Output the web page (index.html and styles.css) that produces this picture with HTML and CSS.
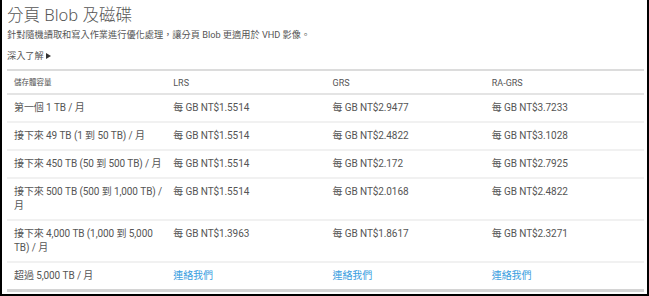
FILE: index.html
```html
<!DOCTYPE html>
<html lang="zh-Hant">
<head>
<meta charset="utf-8">
<link rel="stylesheet" href="styles.css">
</head>
<body>
<div class="frame">
  <h1 class="title">分頁 Blob 及磁碟</h1>
  <p class="desc">針對隨機讀取和寫入作業進行優化處理，讓分頁 Blob 更適用於 VHD 影像。</p>
  <p class="more">深入了解 <span class="tri"></span></p>
  <table class="prices">
    <colgroup>
      <col class="col"><col class="col"><col class="col"><col class="col">
    </colgroup>
    <thead>
      <tr><th><span class="cjk-head">儲存體容量</span></th><th>LRS</th><th>GRS</th><th>RA-GRS</th></tr>
    </thead>
    <tbody>
      <tr><td>第一個 1 TB / 月</td><td>每 GB NT$1.5514</td><td>每 GB NT$2.9477</td><td>每 GB NT$3.7233</td></tr>
      <tr><td>接下來 49 TB (1 到 50 TB) / 月</td><td>每 GB NT$1.5514</td><td>每 GB NT$2.4822</td><td>每 GB NT$3.1028</td></tr>
      <tr><td>接下來 450 TB (50 到 500 TB) / 月</td><td>每 GB NT$1.5514</td><td>每 GB NT$2.172</td><td>每 GB NT$2.7925</td></tr>
      <tr><td>接下來 500 TB (500 到 1,000 TB) / 月</td><td>每 GB NT$1.5514</td><td>每 GB NT$2.0168</td><td>每 GB NT$2.4822</td></tr>
      <tr><td>接下來 4,000 TB (1,000 到 5,000 TB) / 月</td><td>每 GB NT$1.3963</td><td>每 GB NT$1.8617</td><td>每 GB NT$2.3271</td></tr>
      <tr class="last"><td>超過 5,000 TB / 月</td><td><a class="link" href="#">連絡我們</a></td><td><a class="link" href="#">連絡我們</a></td><td><a class="link" href="#">連絡我們</a></td></tr>
    </tbody>
  </table>
</div>
</body>
</html>
```

FILE: styles.css
```css
html, body {
  margin: 0;
  padding: 0;
  background: #fff;
}
body {
  font-family: Roboto, "Noto Sans CJK TC", sans-serif;
  color: #555;
  font-size: 10px;
}
.frame {
  box-sizing: border-box;
  width: 649px;
  height: 296px;
  border-left: 2px solid #000;
  border-right: 2px solid #000;
  border-bottom: 2px solid #000;
  padding: 2px 3px 0 5px;
  overflow: hidden;
}
.title {
  margin: 0;
  font-family: "Noto Sans", "Noto Sans CJK TC", sans-serif;
  font-weight: 300;
  font-size: 16.5px;
  line-height: 26px;
  color: #555;
}
.desc {
  margin: 0;
  line-height: 14px;
  font-size: 9.2px;
}
.more {
  margin: 7px 0 0;
  line-height: 14px;
  font-size: 9.2px;
}
.tri {
  display: inline-block;
  width: 0;
  height: 0;
  border-left: 5px solid #333;
  border-top: 3px solid transparent;
  border-bottom: 3px solid transparent;
  vertical-align: 0;
}
.prices {
  margin-top: 6px;
  width: 637px;
  table-layout: fixed;
  border-collapse: collapse;
  border-top: 2px solid #dcdcdc;
  border-bottom: 3px solid #d4d4d4;
}
.col { width: 25%; }
.prices th {
  text-align: left;
  font-weight: normal;
  font-size: 9px;
  line-height: 14px;
  padding: 4px 7px 3px;
  border-bottom: 2px solid #e4e4e4;
}
.cjk-head {
  font-size: 7.5px;
}
.prices td {
  text-align: left;
  vertical-align: top;
  line-height: 14px;
  letter-spacing: -0.1px;
  padding: 6px 2px 6px 7px;
  border-bottom: 2px solid #f1f1f1;
}
.prices tr.last td {
  border-bottom: none;
}
.link {
  color: #3a9ee0;
  text-decoration: none;
}
```
